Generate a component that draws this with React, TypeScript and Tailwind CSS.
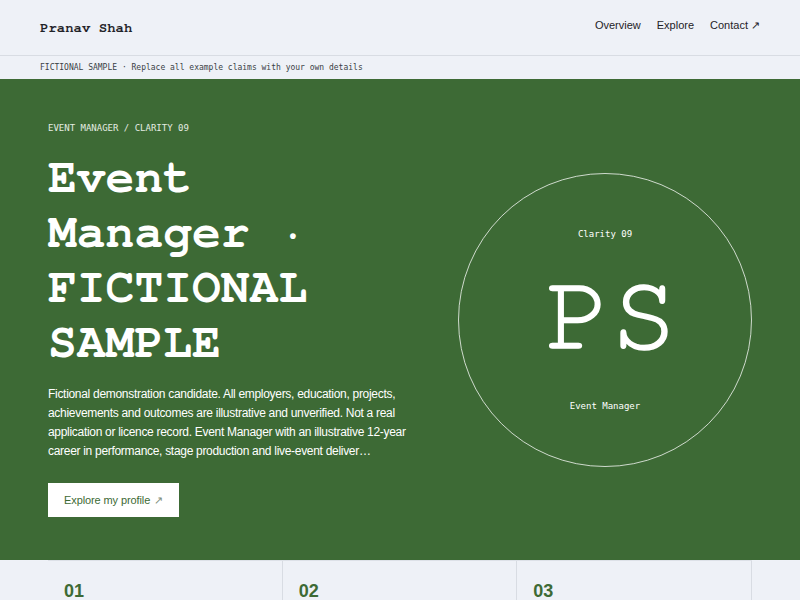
import React from "react";

const MONO = "font-['FreeMono','Courier_New',monospace]";
const SMALLMONO = "font-['DejaVu_Sans_Mono',monospace]";
const SANS = "font-['Liberation_Sans',Arial,sans-serif]";

export default function App() {
  return (
    <div className={`min-h-screen bg-[#eef1f7] ${SANS}`}>
      <header className="h-[56px] flex items-center justify-between px-10 border-b border-[#d8dce3]">
        <div className={`${MONO} font-bold text-[14px] text-[#1f2328] mt-[2px]`}>Pranav Shah</div>
        <nav className="flex items-center gap-4 text-[11px] text-[#1f2328] -mt-[4px]">
          <span>Overview</span>
          <span>Explore</span>
          <span>Contact ↗</span>
        </nav>
      </header>
      <div className={`h-[23px] flex items-center px-10 ${SMALLMONO} text-[8px] text-[#3a3f46]`}>
        FICTIONAL SAMPLE · Replace all example claims with your own details
      </div>
      <section className="bg-[#3d6a35] px-12 pt-[43px] pb-[43px] flex items-center justify-between">
        <div className="w-[362px]">
          <div className={`${SMALLMONO} text-[9px] leading-[13px] text-[#e4ece1] uppercase`}>
            Event Manager / Clarity 09
          </div>
          <h1 className={`${MONO} font-bold text-[48px] leading-[55px] text-white mt-4`}>
            Event Manager · FICTIONAL SAMPLE
          </h1>
          <p className="mt-[14px] text-[12px] leading-[19px] tracking-[-0.3px] text-white">
            Fictional demonstration candidate. All employers, education, projects, achievements and outcomes are illustrative and unverified. Not a real application or licence record. Event Manager with an illustrative 12-year career in performance, stage production and live-event deliver…
          </p>
          <button className="mt-[22px] h-[34px] px-4 bg-white text-[#3d6a35] text-[11px] tracking-[-0.1px] flex items-center">
            Explore my profile <span className="ml-1 text-[#7f8f7c]">↗</span>
          </button>
        </div>
        <div className="w-[294px] h-[294px] rounded-full border border-white/75 flex flex-col items-center justify-center text-white">
          <div className={`${SMALLMONO} text-[9px] leading-[12px]`}>Clarity 09</div>
          <div className={`${MONO} text-[110px] leading-[110px] mt-[20px] pl-[12px] [-webkit-text-stroke:1.5px_#ffffff]`}>PS</div>
          <div className={`${SMALLMONO} text-[9px] leading-[12px] mt-[30px]`}>Event Manager</div>
        </div>
      </section>
      <section className="px-12">
        <div className="grid grid-cols-3 border-t border-[#dde1e8]">
          {["01", "02", "03"].map((n) => (
            <div key={n} className="border-r border-[#d8dce3] px-4 pt-[19px] h-[60px]">
              <div className="text-[18px] font-bold text-[#3d6a35] leading-[22px]">{n}</div>
            </div>
          ))}
        </div>
      </section>
    </div>
  );
}
